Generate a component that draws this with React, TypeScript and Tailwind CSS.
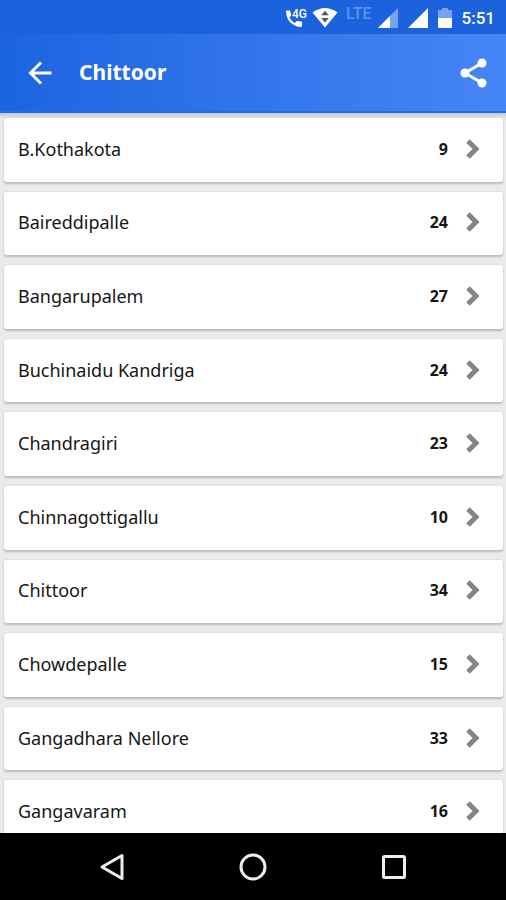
const places = [
  { name: 'B.Kothakota', count: 9 },
  { name: 'Baireddipalle', count: 24 },
  { name: 'Bangarupalem', count: 27 },
  { name: 'Buchinaidu Kandriga', count: 24 },
  { name: 'Chandragiri', count: 23 },
  { name: 'Chinnagottigallu', count: 10 },
  { name: 'Chittoor', count: 34 },
  { name: 'Chowdepalle', count: 15 },
  { name: 'Gangadhara Nellore', count: 33 },
  { name: 'Gangavaram', count: 16 },
];

function StatusBar() {
  return (
    <div className="flex h-[34px] shrink-0 items-center justify-end bg-[#1b62dc] pt-[2px] pr-[11px] font-['Roboto',sans-serif] text-white">
      <svg className="h-5 w-[22px]" viewBox="0 0 22 20" fill="currentColor" aria-hidden="true">
        <path d="M1 3.5 Q1 2.5 2 2.5 H4.6 Q5.4 2.5 5.5 3.4 L6.1 7 Q6.2 7.7 5.6 8.2 L4.3 9.5 Q6.2 13 9.8 14.9 L11.5 13.2 Q12 12.7 12.7 12.9 L16 13.5 Q17 13.7 17 14.5 V18 Q17 19 16 19 C8 19 1 12 1 3.5Z" />
        <text x="7" y="10" fontSize="12" fontWeight="500">4G</text>
      </svg>
      <svg className="ml-[5px] h-5 w-[26px]" viewBox="0 0 26 20" aria-hidden="true">
        <path d="M0.5 4.5 Q13 -4.5 25.5 4.5 L13 19.5Z" fill="currentColor" />
        <path d="M9.2 7.2 L13 2.7 L16.8 7.2Z M9.2 10 L13 14.5 L16.8 10Z" fill="#555" />
      </svg>
      <span className="mt-[-8px] ml-2 text-base leading-4 font-medium text-[#5d93ee]">LTE</span>
      <svg className="ml-[6px] h-5 w-5" viewBox="0 0 20 20" aria-hidden="true">
        <path d="M0 20 L20 0 V20Z" fill="#76a3f0" />
        <path d="M0 20 L12 8 V20Z" fill="currentColor" />
      </svg>
      <svg className="ml-[10px] h-5 w-5" viewBox="0 0 20 20" fill="currentColor" aria-hidden="true">
        <path d="M0 20 L20 0 V20Z" />
      </svg>
      <svg className="ml-[10px] h-5 w-[14px]" viewBox="0 0 14 20" aria-hidden="true">
        <path d="M4 0 H10 V2 H13 Q14 2 14 3 V10 H0 V3 Q0 2 1 2 H4Z" fill="#76a3f0" />
        <path d="M0 10 H14 V19 Q14 20 13 20 H1 Q0 20 0 19Z" fill="currentColor" />
      </svg>
      <span className="ml-[10px] text-[17px] leading-5 font-medium">5:51</span>
    </div>
  );
}

function Header() {
  return (
    <header className="flex h-[79px] shrink-0 items-center border-b-2 border-[#1c70e8] bg-linear-to-r from-[#1c64e0] to-[#4685f6] pr-[18px] pl-7 text-white">
      <button type="button" aria-label="Back" className="flex size-6 items-center justify-center">
        <svg className="size-6" viewBox="0 0 24 24" fill="none" stroke="currentColor" strokeWidth="3" aria-hidden="true">
          <path d="M23.5 12 H3 M13 1.5 L2.5 12 L13 22.5" />
        </svg>
      </button>
      <h1 className="ml-[27px] flex-1 text-[21px] font-bold">Chittoor</h1>
      <button type="button" aria-label="Share" className="flex h-[30px] w-7 items-center justify-center">
        <svg className="h-[30px] w-7" viewBox="0 0 28 30" fill="currentColor" aria-hidden="true">
          <path d="M22 5 L5 15 L22 25" fill="none" stroke="currentColor" strokeWidth="3" />
          <circle cx="22" cy="5" r="4.5" />
          <circle cx="5" cy="15" r="4.5" />
          <circle cx="22" cy="25" r="4.5" />
        </svg>
      </button>
    </header>
  );
}

function PlaceRow({ name, count }: { name: string; count: number }) {
  return (
    <li className="flex">
      <button
        type="button"
        className="flex flex-1 items-center rounded-[3px] bg-white pr-[23px] pb-[2px] pl-[14px] text-left shadow-[0_2px_2px_#bcbcbc,0_0_2px_#d0d0d0]"
      >
        <span className="flex-1 text-lg text-[#161616]">{name}</span>
        <span className="text-base font-bold text-[#161616]">{count}</span>
        <svg className="ml-[18px] h-5 w-[14px]" viewBox="0 0 14 20" fill="none" stroke="#858585" strokeWidth="5" aria-hidden="true">
          <path d="M2 2 L10 10 L2 18" />
        </svg>
      </button>
    </li>
  );
}

function NavigationBar() {
  return (
    <nav className="flex h-[67px] shrink-0 items-center justify-around bg-black px-[42px] text-[#eeeeee]">
      <button type="button" aria-label="Back" className="flex size-7 items-center justify-center">
        <svg className="size-7" viewBox="0 0 28 28" fill="none" stroke="currentColor" strokeWidth="3" strokeLinejoin="round" aria-hidden="true">
          <path d="M24 2.5 V25.5 L4 14Z" />
        </svg>
      </button>
      <button type="button" aria-label="Home" className="flex size-7 items-center justify-center">
        <svg className="size-7" viewBox="0 0 28 28" fill="none" stroke="currentColor" strokeWidth="3" aria-hidden="true">
          <circle cx="14" cy="14" r="12" />
        </svg>
      </button>
      <button type="button" aria-label="Recent apps" className="flex size-7 items-center justify-center">
        <svg className="size-7" viewBox="0 0 28 28" fill="none" stroke="currentColor" strokeWidth="3" aria-hidden="true">
          <rect x="3.5" y="3.5" width="21" height="21" rx="1" />
        </svg>
      </button>
    </nav>
  );
}

export default function App() {
  return (
    <div className="flex h-screen flex-col bg-[#eaeaea] font-['Noto_Sans',sans-serif]">
      <StatusBar />
      <Header />
      <main className="min-h-0 flex-1 overflow-y-auto bg-linear-to-b from-[#c8c8c8] to-[#eaeaea] to-[6px] [scrollbar-width:none]">
        <ul className="grid min-h-[731px] auto-rows-fr gap-[10px] px-1 pt-[5px] pr-[3px]">
          {places.map((place) => (
            <PlaceRow key={place.name} name={place.name} count={place.count} />
          ))}
        </ul>
      </main>
      <NavigationBar />
    </div>
  );
}
